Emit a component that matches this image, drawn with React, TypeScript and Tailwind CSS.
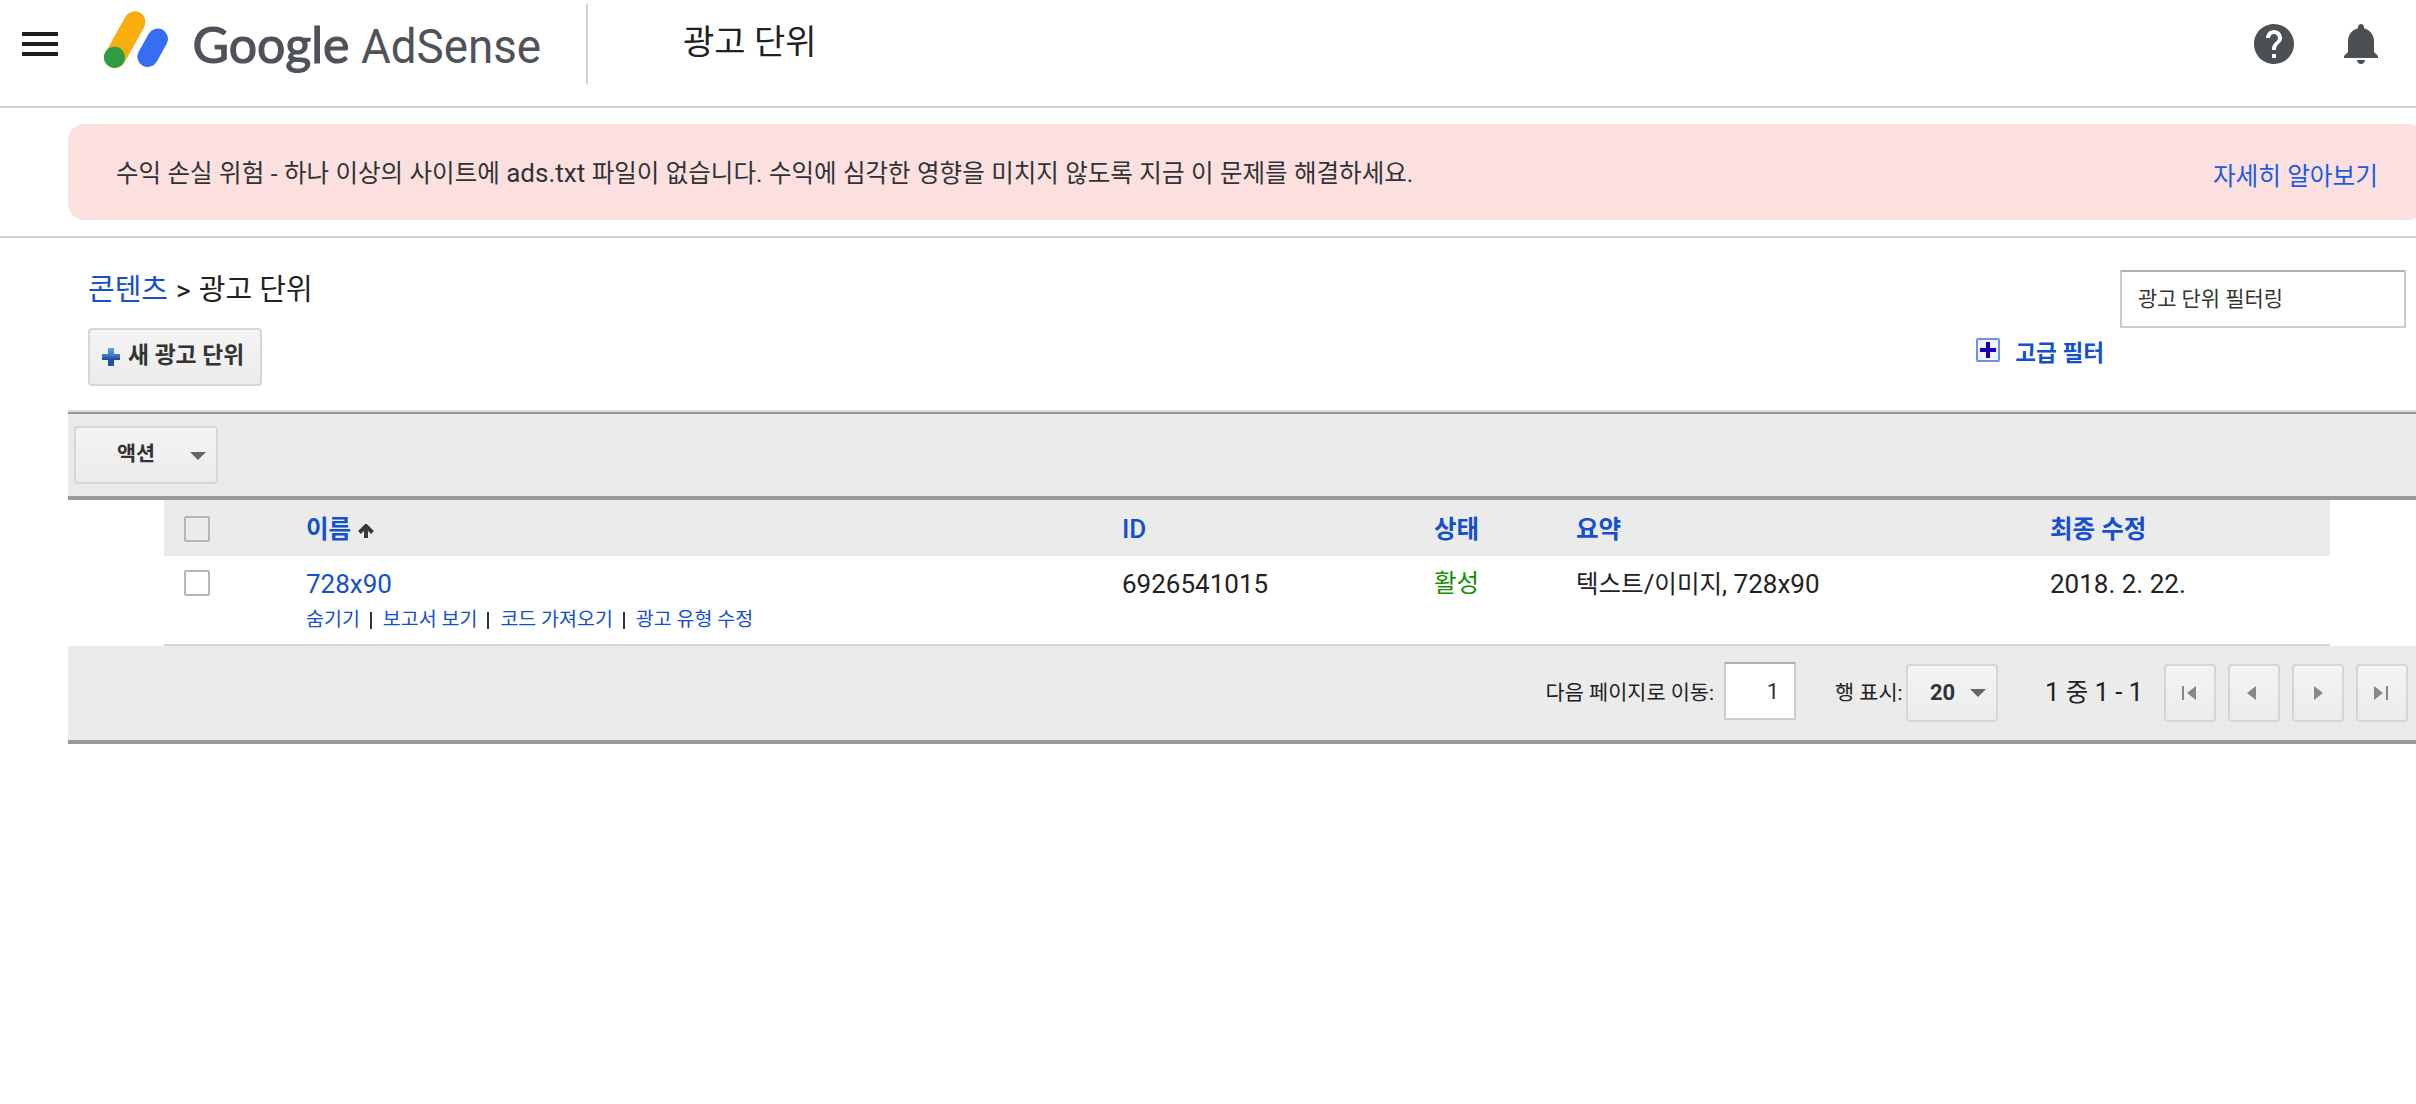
import React, { useState } from 'react';
import { MdHelp, MdMenu } from 'react-icons/md';

const linkColor = 'text-[#1450cc]';

// AdSense mark with the wordmark next to it
function Logo() {
    return (
        <svg width="460" height="80" viewBox="0 0 460 80" className="ml-[32px]">
            <line x1="38.8" y1="22" x2="19" y2="57.5" stroke="#f9ae10" strokeWidth="21.5" strokeLinecap="round" />
            <circle cx="18.5" cy="57.3" r="10.6" fill="#2d9c43" />
            <line x1="61.7" y1="38.8" x2="51.7" y2="56.7" stroke="#356ef4" strokeWidth="20.6" strokeLinecap="round" />
            <text
                x="96.500"
                y="63"
                textLength="157"
                lengthAdjust="spacingAndGlyphs"
                fontSize="51"
                fill="#4f5258"
                stroke="#4f5258"
                strokeWidth="1.2"
                className="font-['Lato',sans-serif]"
            >
                Google
            </text>
            <text
                x="265"
                y="63"
                textLength="180"
                lengthAdjust="spacingAndGlyphs"
                fontSize="48"
                fill="#4f5258"
                className="font-['Roboto',sans-serif]"
            >
                AdSense
            </text>
        </svg>
    );
}

function BellIcon() {
    return (
        <svg width="48" height="48" viewBox="0 0 24 24" fill="currentColor">
            <path d="M11.5 22c1.1 0 2-.9 2-2h-4c0 1.1.9 2 2 2zm6.5-6v-5.5c0-3.07-2.13-5.64-5-6.32V3.5c0-.83-.67-1.5-1.5-1.5S10 2.67 10 3.5v.68c-2.87.68-5 3.25-5 6.32V16l-2 2v1h17v-1l-2-2z" />
        </svg>
    );
}

function BluePlus() {
    return (
        <svg width="18" height="18" viewBox="0 0 18 18">
            <defs>
                <linearGradient id="plus" x1="0" y1="0" x2="0" y2="1">
                    <stop offset="0" stopColor="#5fa6de" />
                    <stop offset="0.45" stopColor="#3a74c0" />
                    <stop offset="0.6" stopColor="#214f9f" />
                    <stop offset="1" stopColor="#2453b0" />
                </linearGradient>
            </defs>
            <path d="M6 0h6v6h6v6h-6v6H6v-6H0V6h6z" fill="url(#plus)" />
        </svg>
    );
}

function ExpandIcon() {
    return (
        <svg width="24" height="24" viewBox="0 0 24 24">
            <rect x="1" y="1" width="22" height="22" rx="1" fill="#f1f4ff" stroke="#6a91ee" strokeWidth="2" />
            <path d="M10 4h4v6h6v4h-6v6h-4v-6H4v-4h6z" fill="#1400b8" />
        </svg>
    );
}

function Caret() {
    return (
        <svg width="16" height="8" viewBox="0 0 16 8">
            <path d="M0 0h16L8 8z" fill="#666" />
        </svg>
    );
}

function Header() {
    return (
        <header className="flex h-[108px] border-b-2 border-[#d2d2d8]">
            <button className="mt-[20px] ml-[16px] h-[48px] w-[48px] text-[#1c1c1c]">
                <MdMenu size={48} />
            </button>
            <Logo />
            <div className="mt-1 ml-[30px] h-20 w-[2px] bg-[#d2d2d8]" />
            <h1 className="ml-[95px] mt-[22px] flex-1 text-[34px] leading-[40px] text-[#202124]">광고 단위</h1>
            <div className="mt-[20px] mr-[30px] flex gap-[40px] text-[#4c5055]">
                <MdHelp size={48} />
                <BellIcon />
            </div>
        </header>
    );
}

function Banner() {
    return (
        <div className="flex h-[130px] border-b-2 border-[#d2d2d8] pl-[68px] pt-4">
            <div className="flex h-24 w-[2356px] shrink-0 justify-between rounded-2xl bg-[#fce0e0] pl-12 pr-[46px] text-[24.5px]">
                <p className="leading-[98px] text-[#303336] [word-spacing:0.4px]">
                    수익 손실 위험 - 하나 이상의 사이트에 <span className="text-[26px]">ads.txt</span> 파일이 없습니다. 수익에 심각한 영향을
                    미치지 않도록 지금 이 문제를 해결하세요.
                </p>
                <a href="#" className="text-[24.7px] leading-[106px] text-[#1a5ce6]">자세히 알아보기</a>
            </div>
        </div>
    );
}

function PageHead() {
    return (
        <div className="flex h-[172px] pl-[88px] pr-[10px]">
            <div className="flex-1">
                <div className="mt-[32px] flex h-[40px] items-center text-[29px] leading-[40px]">
                    <a href="#" className={linkColor}>콘텐츠</a>
                    <span className="ml-[8px] mr-[8px] mt-[2px] text-[28px]">&gt;</span>
                    <span>광고 단위</span>
                </div>
                <button className="mt-[18px] flex h-[58px] w-[174px] items-center rounded border-2 border-[#d6d6d6] bg-linear-to-b from-[#f4f4f4] to-[#ececec] pl-[12px] text-[22.8px] font-bold text-[#333]">
                    <BluePlus />
                    <span className="ml-[8px] -mt-[2px] leading-[30px]">새 광고 단위</span>
                </button>
            </div>
            <a href="#" className={`mt-[100px] flex h-[24px] gap-[15px] text-[22.6px] font-bold ${linkColor}`}>
                <ExpandIcon />
                <span className="mt-[3px] leading-[26px]">고급 필터</span>
            </a>
            <div className="ml-[16px] mt-[32px] flex h-[58px] w-[286px] border-2 border-[#ccc] border-t-[#b0b0b0] pl-4 text-[20.9px] leading-[54px] text-[#333]">
                광고 단위 필터링
            </div>
        </div>
    );
}

function Checkbox() {
    const [checked, setChecked] = useState(false);

    return (
        <input
            type="checkbox"
            checked={checked}
            onChange={() => setChecked(!checked)}
            className="ml-5 mt-[14px] h-[26px] w-[26px] appearance-none rounded-[2px] border-2 border-[#b6b6b6]"
        />
    );
}

const columns = 'grid grid-cols-[142px_816px_312px_142px_474px_1fr]';
const actions = ['숨기기', '보고서 보기', '코드 가져오기', '광고 유형 수정'];

function AdTable() {
    return (
        <div className="ml-[164px] mr-[86px] text-[24.5px] leading-[36px]">
            <div className={`${columns} h-[56px] bg-[#ebebeb] font-bold ${linkColor}`}>
                <div className="pt-[2px]"><Checkbox /></div>
                <div className="flex pt-[12px]">
                    이름
                    <svg width="16" height="14" viewBox="0 0 16 14" className="ml-[7px] mt-[12px]">
                        <path d="M8 14V3M1.5 8.5L8 2l6.500 6.500" fill="none" stroke="#3a3a3a" strokeWidth="4" />
                    </svg>
                </div>
                <div className="pt-[11px] text-[26px] font-medium">ID</div>
                <div className="pt-[12px]">상태</div>
                <div className="pt-[12px]">요약</div>
                <div className="pt-[12px]">최종 수정</div>
            </div>
            <div className={`${columns} h-[90px] border-b-2 border-[#d5d5d5]`}>
                <div><Checkbox /></div>
                <div className="pt-[10px]">
                    <a href="#" className={`block text-[26px] ${linkColor}`}>728x90</a>
                    <div className="flex text-[19.5px] leading-[36px]">
                        {actions.map((action, i) => (
                            <React.Fragment key={action}>
                                {i > 0 && <span className="ml-[10px] mr-[11px] mt-[10px] h-[17px] w-[2px] bg-[#333]" />}
                                <a href="#" className={linkColor}>{action}</a>
                            </React.Fragment>
                        ))}
                    </div>
                </div>
                <div className="pt-[10px] text-[26px]">6926541015</div>
                <div className="pt-[10px] text-[#159000]">활성</div>
                <div className="pt-[10px]">
                    텍스트<span className="text-[26px]">/</span>이미지<span className="text-[26px]">, 728x90</span>
                </div>
                <div className="pt-[10px] text-[26px]">2018. 2. 22.</div>
            </div>
        </div>
    );
}

// Icon shapes inside the 52px pager buttons
const pagerIcons = [
    'M16 20h2v14h-2zM30 20v14l-9-7z',
    'M26 20v14l-9-7z',
    'M20 20v14l9-7z',
    'M16 20v14l9-7zM28 20h2v14h-2z',
];

function Pager() {
    return (
        <div className="flex h-[98px] justify-end border-b-4 border-[#999] bg-[#ebebeb] pr-[8px] text-[20.8px] leading-[58px]">
            <span className="mt-[18px] mr-[10px]">다음 페이지로 이동:</span>
            <div className="mt-4 h-[58px] w-[72px] border-2 border-[#ccc] border-t-[#b0b0b0] bg-white pr-[15px] text-right text-[22px] leading-[56px] text-[#333]">1</div>
            <span className="ml-[39px] mt-[18px] w-[71px]">행 표시:</span>
            <button className="mt-[18px] flex h-[58px] w-[92px] items-center rounded border-2 border-[#d6d6d6] bg-linear-to-b from-[#f4f4f4] to-[#ececec] pl-[22px] text-[22px] font-bold text-[#333]">
                <span className="w-[40px] text-left">20</span>
                <Caret />
            </button>
            <span className="ml-[47px] mt-[17px] w-[119px] text-[26px] [word-spacing:-0.3px]">
                1 <span className="text-[24.5px]">중</span> 1 - 1
            </span>
            <div className="mt-[18px] flex gap-3">
                {pagerIcons.map((d) => (
                    <button key={d} className="h-[58px] w-[52px] rounded border-2 border-[#d6d6d6] bg-linear-to-b from-[#f4f4f4] to-[#ececec]">
                        <svg width="48" height="54" viewBox="0 0 48 54">
                            <path d={d} fill="#888" />
                        </svg>
                    </button>
                ))}
            </div>
        </div>
    );
}

function App() {
    return (
        <div className="h-[1104px] w-[2416px] overflow-hidden bg-white font-['Roboto','Noto_Sans_CJK_KR',sans-serif] text-[#222]">
            <Header />
            <Banner />
            <PageHead />
            <div className="ml-[68px]">
                {/* Bulk actions */}
                <div className="border-t-2 border-[#ddd]">
                    <div className="flex h-[88px] border-b-4 border-t-2 border-[#999] bg-[#ebebeb]">
                        <button className="ml-[6px] mt-3 flex h-[58px] w-[144px] items-center rounded border-2 border-[#d6d6d6] bg-linear-to-b from-[#f4f4f4] to-[#ececec] pl-[41px] text-[20.7px] font-bold text-[#333]">
                            <span className="-mt-[2px] w-[73px] text-left leading-[30px]">액션</span>
                            <span className="mt-[2px]"><Caret /></span>
                        </button>
                    </div>
                </div>
                <div className="-ml-[68px]">
                    <AdTable />
                </div>
                <Pager />
            </div>
        </div>
    );
}

export default App;
